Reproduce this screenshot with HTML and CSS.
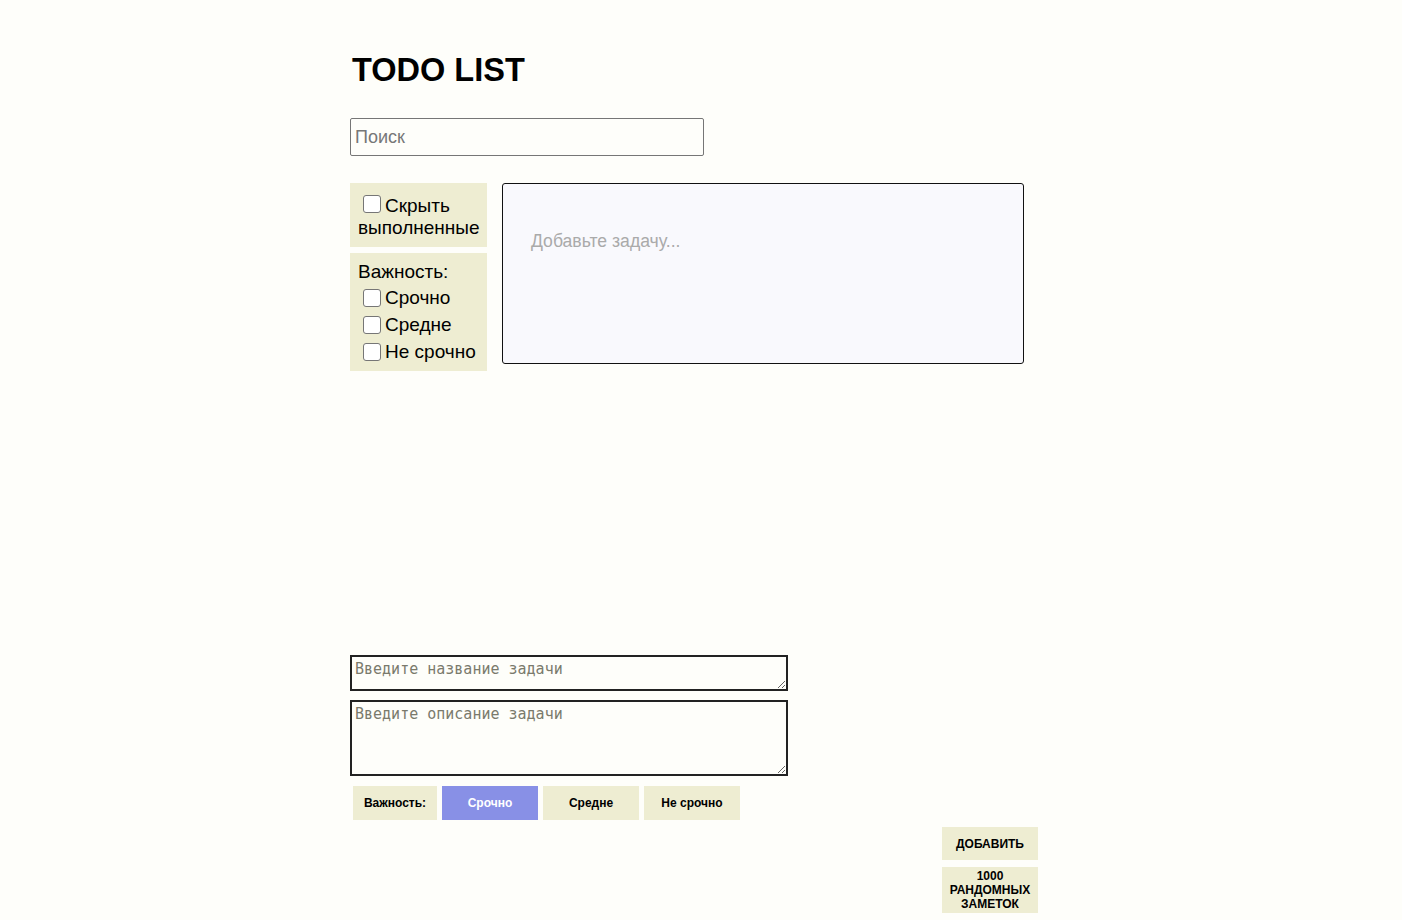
FILE: index.html
```html
<!DOCTYPE html>
<html lang="ru">
<head>
<meta charset="utf-8">
<title>TODO LIST</title>
<link rel="stylesheet" href="styles.css">
</head>
<body>
<div class="app">
  <h1 class="title">TODO LIST</h1>
  <input class="search" type="text" placeholder="Поиск">
  <div class="board">
    <aside class="filters">
      <div class="filter-box hide-box">
        <label><input type="checkbox" class="cb">Скрыть<br>выполненные</label>
      </div>
      <div class="filter-box prio-box">
        <div class="prio-title">Важность:</div>
        <label class="opt"><input type="checkbox" class="cb">Срочно</label>
        <label class="opt"><input type="checkbox" class="cb">Средне</label>
        <label class="opt"><input type="checkbox" class="cb">Не срочно</label>
      </div>
    </aside>
    <section class="tasks">
      <p class="empty">Добавьте задачу...</p>
    </section>
  </div>
  <form class="new-task">
    <textarea class="ta ta-title" placeholder="Введите название задачи"></textarea>
    <textarea class="ta ta-desc" placeholder="Введите описание задачи"></textarea>
    <div class="prio-row">
      <span class="chip chip-label">Важность:</span>
      <button type="button" class="chip active">Срочно</button>
      <button type="button" class="chip">Средне</button>
      <button type="button" class="chip">Не срочно</button>
    </div>
    <div class="actions">
      <button type="button" class="act">Добавить</button>
      <button type="button" class="act">1000 рандомных заметок</button>
    </div>
  </form>
</div>
</body>
</html>
```
FILE: styles.css
```css
html, body {
  margin: 0;
  padding: 0;
  background: #fefefa;
}
body {
  font-family: "Liberation Sans", Arial, sans-serif;
  color: #000;
}
.app {
  width: 688px;
  margin-left: 350px;
  padding-top: 52px;
  display: flex;
  flex-direction: column;
}
.title {
  margin: 0 0 0 2px;
  font-size: 32.5px;
  line-height: 37px;
  font-weight: bold;
}
.search {
  margin-top: 29px;
  width: 354px;
  height: 38px;
  box-sizing: border-box;
  border: 1px solid #767676;
  border-radius: 2px;
  padding: 0 4px;
  font-family: "Liberation Sans", Arial, sans-serif;
  font-size: 18px;
  background: #fefefa;
}
.search::placeholder { color: #777; }
.board {
  margin-top: 27px;
  display: flex;
  align-items: flex-start;
  gap: 15px;
}
.filters {
  width: 137px;
  display: flex;
  flex-direction: column;
  gap: 6px;
}
.filter-box {
  background: #eeedd2;
  font-size: 19px;
  line-height: 22px;
  box-sizing: border-box;
}
.hide-box {
  padding: 12px 2px 8px 8px;
  height: 64px;
}
.hide-box label { display: block; white-space: nowrap; }
.prio-box {
  padding: 8px 2px 7px 8px;
}
.opt {
  display: flex;
  align-items: center;
  height: 27px;
  padding-top: 2px;
  box-sizing: border-box;
}
.cb {
  appearance: none;
  -webkit-appearance: none;
  width: 18px;
  height: 18px;
  margin: 0 4px 0 5px;
  vertical-align: -1px;
  border: 1px solid #767676;
  border-radius: 3px;
  background: #fff;
  box-sizing: border-box;
}
.tasks {
  width: 522px;
  height: 181px;
  box-sizing: border-box;
  border: 1px solid #111;
  border-radius: 3px;
  background: #f9f9fd;
  padding: 47px 28px 0;
}
.empty {
  margin: 0;
  font-size: 17.6px;
  color: #aaa;
}
.new-task {
  margin-top: 284px;
  display: flex;
  flex-direction: column;
}
.ta {
  display: block;
  width: 438px;
  box-sizing: border-box;
  border: 2px solid #222;
  background: #fefefa;
  padding: 3px 3px;
  margin: 0;
  font-family: "DejaVu Sans Mono", monospace;
  font-size: 15px;
  line-height: 18px;
}
.ta::placeholder { color: #7a7a6c; }
.ta-title { height: 36px; }
.ta-desc { height: 76px; margin-top: 9px; }
.prio-row {
  margin-top: 10px;
  margin-left: 3px;
  display: flex;
  gap: 5px;
}
.chip {
  height: 34px;
  width: 96px;
  border: none;
  background: #eeedd2;
  font-family: "Liberation Sans", Arial, sans-serif;
  font-size: 12px;
  font-weight: bold;
  color: #000;
  display: flex;
  align-items: center;
  justify-content: center;
  padding: 0;
}
.chip-label { width: 84px; }
.chip.active {
  background: #8890e6;
  color: #fff;
}
.actions {
  margin-top: 7px;
  align-self: flex-end;
  display: flex;
  flex-direction: column;
  gap: 7px;
  width: 96px;
}
.act {
  width: 96px;
  border: none;
  background: #eeedd2;
  font-family: "Liberation Sans", Arial, sans-serif;
  font-size: 12px;
  line-height: 14px;
  font-weight: bold;
  text-transform: uppercase;
  padding: 2px 4px;
  min-height: 33px;
  color: #000;
}
```
